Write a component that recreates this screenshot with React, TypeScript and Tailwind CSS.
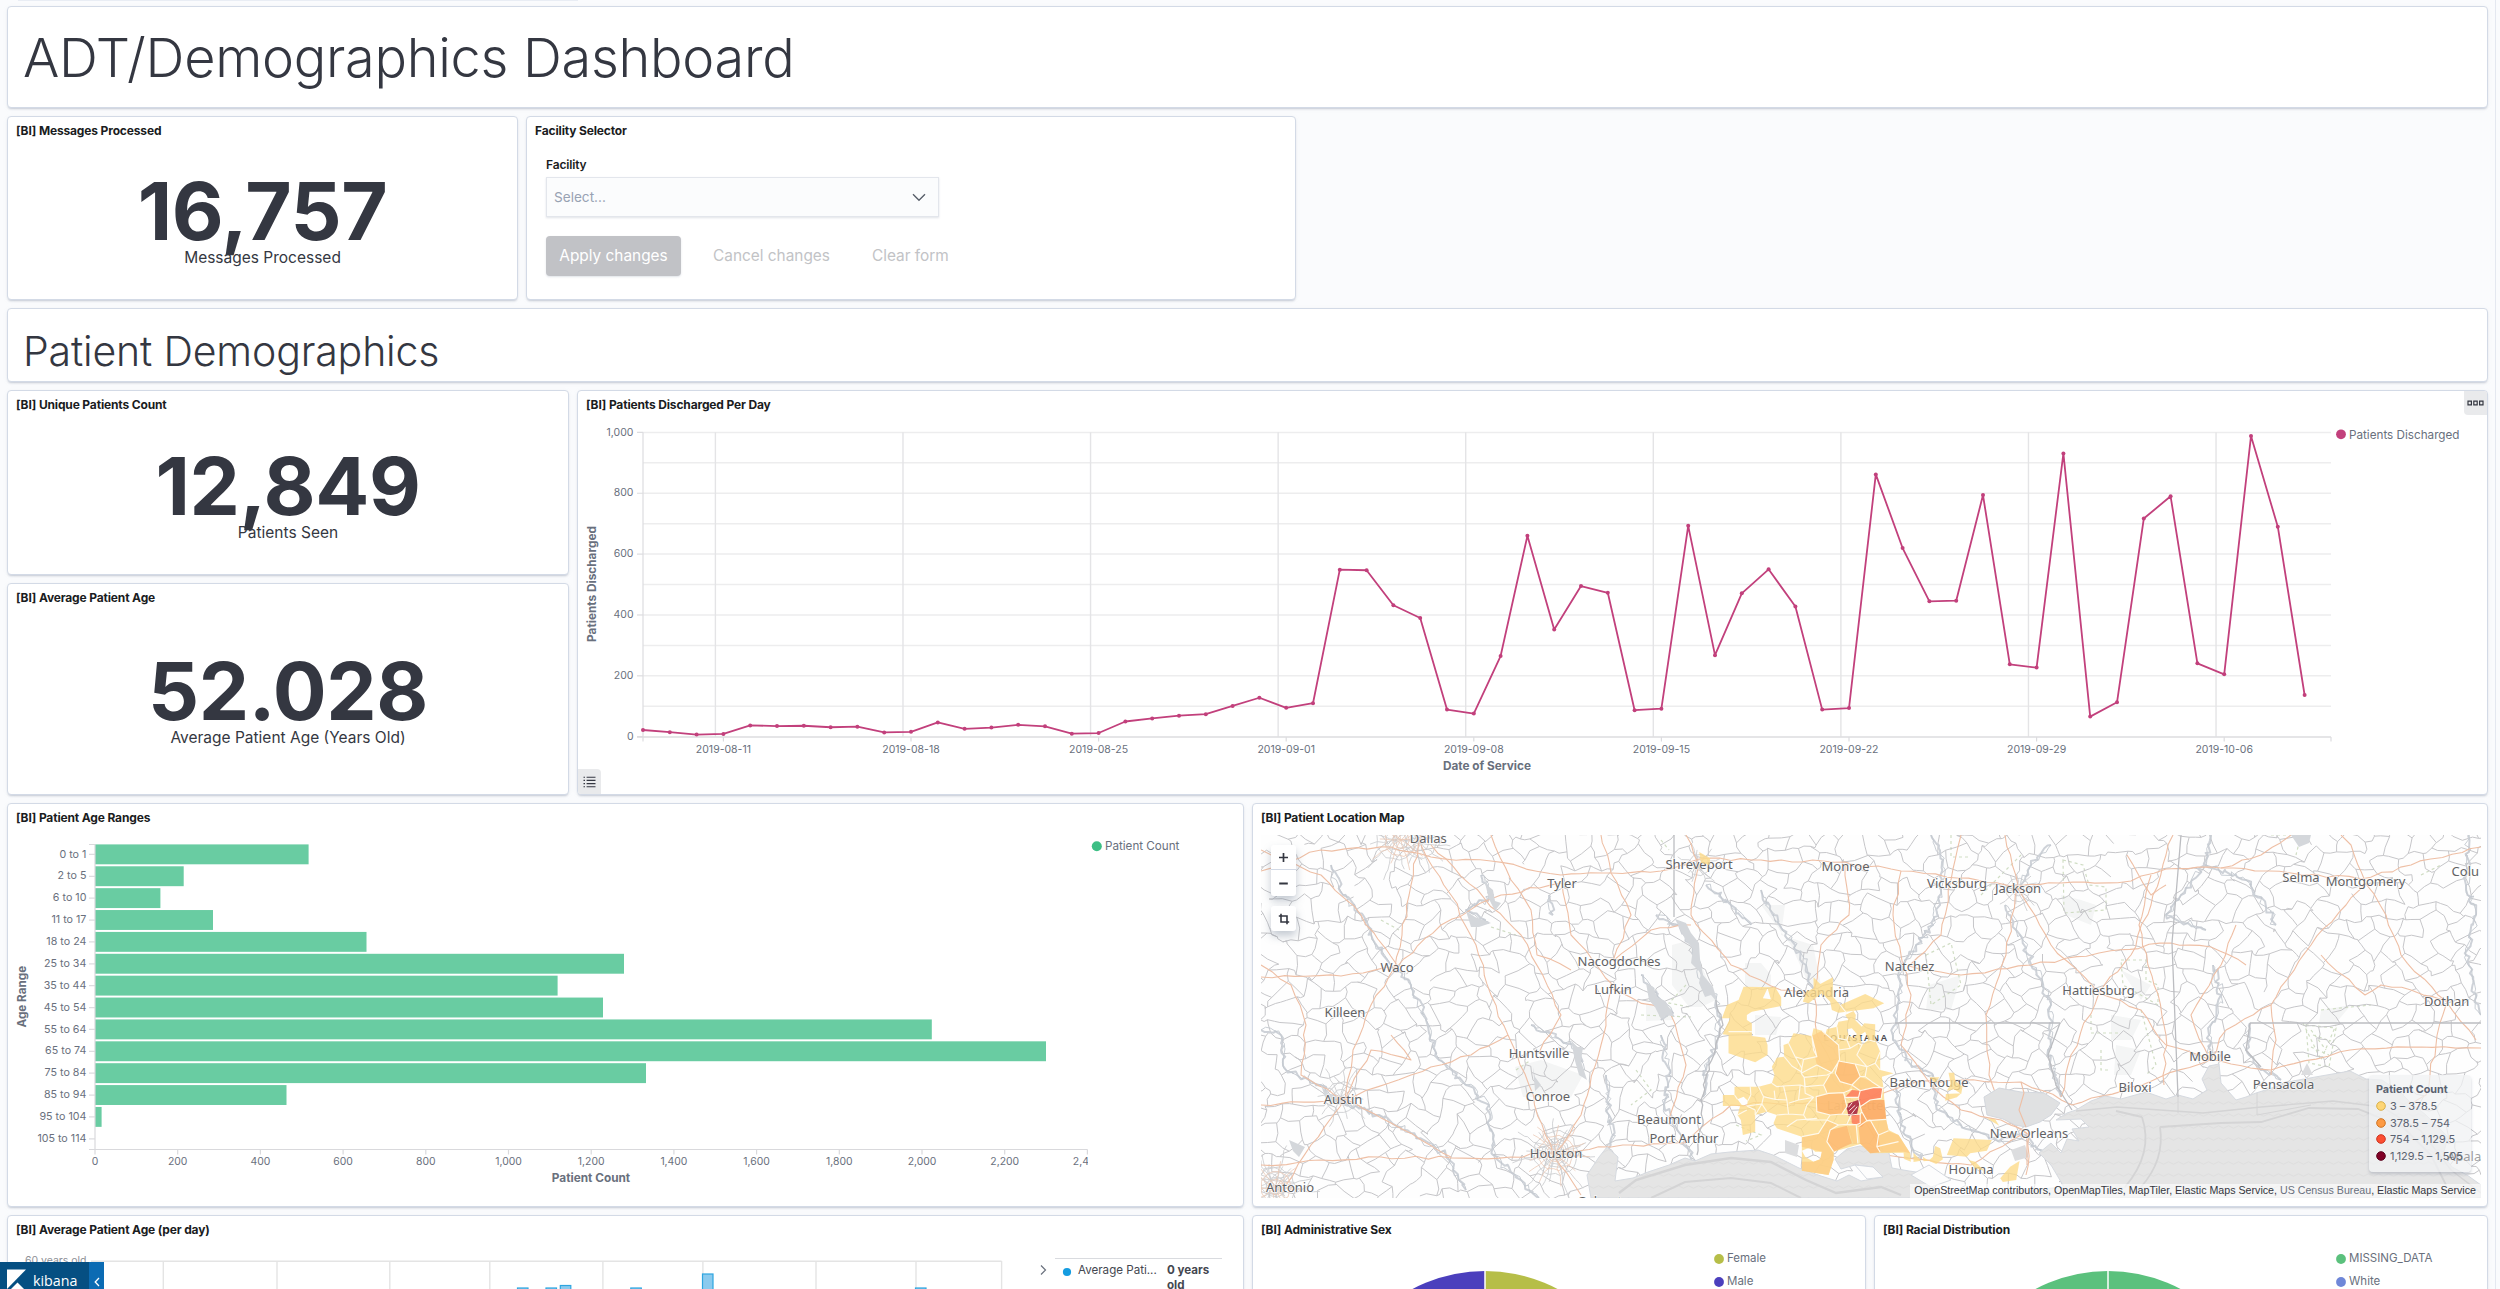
import React from "react";

const INTER = "font-['Inter',sans-serif]";

/* ---------- shared pieces ---------- */

function Panel({
  title,
  className = "",
  children,
}: {
  title?: string;
  className?: string;
  children?: React.ReactNode;
}) {
  return (
    <section
      className={
        "relative shrink-0 overflow-hidden rounded-[4px] border border-[#d3dae6] bg-white shadow-[0_2px_2px_-1px_rgba(152,162,179,0.45),0_1px_5px_-2px_rgba(152,162,179,0.4)] " +
        className
      }
    >
      {title && (
        <h2 className="flex h-[31px] items-center pb-[3px] pl-[8px] text-[12px] font-bold tracking-[-0.15px] text-[#1a1c21]">
          {title}
        </h2>
      )}
      {children}
    </section>
  );
}

function Metric({ value, label, className = "" }: { value: string; label: string; className?: string }) {
  return (
    <div className={"flex flex-col items-center text-[#343741] " + className}>
      <div className="text-[80px] leading-[60px] font-bold tracking-[-0.4px]">{value}</div>
      <div className="relative text-[15.5px] leading-[34px]">{label}</div>
    </div>
  );
}

function T({
  x,
  y,
  children,
  size = 10.5,
  anchor = "middle",
  fill = "#69707d",
  weight = 400,
  rotate,
}: {
  x: number;
  y: number;
  children: React.ReactNode;
  size?: number;
  anchor?: "start" | "middle" | "end";
  fill?: string;
  weight?: number;
  rotate?: boolean;
}) {
  return (
    <text
      x={x}
      y={y}
      dy="0.36em"
      fontSize={size}
      textAnchor={anchor}
      fill={fill}
      fontWeight={weight}
      transform={rotate ? `rotate(-90 ${x} ${y})` : undefined}
    >
      {children}
    </text>
  );
}

/* ---------- line chart ---------- */

const discharged = [
  22, 15, 7, 9, 37, 35, 36, 31, 33, 14, 16, 47, 26, 30, 39, 34, 10, 12, 50, 60, 69, 74, 101, 128, 95, 110, 549, 547,
  432, 390, 89, 76, 265, 660, 352, 495, 473, 87, 92, 693, 268, 471, 550, 428, 89, 94, 862, 620, 445, 447, 794, 238,
  227, 931, 66, 113, 717, 790, 241, 205, 988, 690, 137,
];
const weeks = [
  "2019-08-11",
  "2019-08-18",
  "2019-08-25",
  "2019-09-01",
  "2019-09-08",
  "2019-09-15",
  "2019-09-22",
  "2019-09-29",
  "2019-10-06",
];

function DischargedChart() {
  const px = (i: number) => 643 + i * 26.8;
  const py = (v: number) => 736.7 - v * 0.3043;
  return (
    <svg viewBox="578 422 1909 371" width={1909} height={371} className="block">
      {[1, 2, 3, 4, 5, 6, 7, 8, 9, 10].map((k) => (
        <line key={k} x1={643} x2={2331} y1={py(k * 100)} y2={py(k * 100)} stroke="#ededee" strokeWidth={1.5} />
      ))}
      {weeks.map((w, i) => (
        <g key={w}>
          <line x1={715.4 + i * 187.58} x2={715.4 + i * 187.58} y1={432.3} y2={736.7} stroke="#e4e4e6" strokeWidth={1.4} />
          <line x1={px(3 + i * 7)} x2={px(3 + i * 7)} y1={737} y2={741.5} stroke="#dcdcdf" strokeWidth={1.2} />
          <T x={px(3 + i * 7)} y={749.7}>
            {w}
          </T>
        </g>
      ))}
      <line x1={643} x2={643} y1={432.3} y2={741.5} stroke="#dcdcdf" strokeWidth={1.2} />
      <line x1={637} x2={2331} y1={737} y2={737} stroke="#dcdcdf" strokeWidth={1.5} />
      <line x1={2331} x2={2331} y1={737} y2={741.5} stroke="#dcdcdf" strokeWidth={1.2} />
      {[0, 200, 400, 600, 800, 1000].map((v) => (
        <g key={v}>
          <line x1={637} x2={643} y1={py(v)} y2={py(v)} stroke="#dcdcdf" strokeWidth={1.2} />
          <T x={633.5} y={py(v) - 0.6} anchor="end">
            {v.toLocaleString("en-US")}
          </T>
        </g>
      ))}
      <polyline
        points={discharged.map((v, i) => `${px(i)},${py(v)}`).join(" ")}
        fill="none"
        stroke="#c2407c"
        strokeWidth={1.8}
        strokeLinejoin="round"
      />
      {discharged.map((v, i) => (
        <circle key={i} cx={px(i)} cy={py(v)} r={2} fill="#c2407c" />
      ))}
      <T x={1487} y={765.7} size={11.8} weight={700}>
        Date of Service
      </T>
      <T x={591.7} y={584} size={11.8} weight={700} rotate>
        Patients Discharged
      </T>
      <circle cx={2341} cy={434.3} r={4.9} fill="#c2407c" />
      <T x={2349} y={434.4} size={11.7} anchor="start">
        Patients Discharged
      </T>
    </svg>
  );
}

/* ---------- bar chart ---------- */

const ages: [string, number][] = [
  ["0 to 1", 213.6],
  ["2 to 5", 88.7],
  ["6 to 10", 65.4],
  ["11 to 17", 118],
  ["18 to 24", 271.5],
  ["25 to 34", 529],
  ["35 to 44", 462.6],
  ["45 to 54", 508],
  ["55 to 64", 836.8],
  ["65 to 74", 951],
  ["75 to 84", 551],
  ["85 to 94", 191.5],
  ["95 to 104", 6.6],
  ["105 to 114", 0],
];

function AgeChart() {
  return (
    <svg viewBox="8 835 1235 371" width={1235} height={371} className="block">
      <defs>
        <clipPath id="age-axis">
          <rect x={8} y={1140} width={1080} height={60} />
        </clipPath>
      </defs>
      {ages.map(([label, w], i) => (
        <g key={label}>
          <rect x={95} y={844.4 + i * 21.88} width={w} height={19.9} fill="#69cca2" />
          <line x1={89} x2={95} y1={854.4 + i * 21.88} y2={854.4 + i * 21.88} stroke="#dcdcdf" strokeWidth={1.2} />
          <T x={86.4} y={853.7 + i * 21.88} size={10.7} anchor="end">
            {label}
          </T>
        </g>
      ))}
      <path d="M89 844.5H95V1149.5H89M95 1149.5H1087.5" fill="none" stroke="#d9d9dc" strokeWidth={1.2} />
      <g clipPath="url(#age-axis)">
        {Array.from({ length: 13 }, (_, i) => (
          <g key={i}>
            <line x1={95 + i * 82.7} x2={95 + i * 82.7} y1={1149.5} y2={1154.5} stroke="#d9d9dc" strokeWidth={1.2} />
            <T x={95 + i * 82.7} y={1161.5} size={10.4}>
              {(i * 200).toLocaleString("en-US")}
            </T>
          </g>
        ))}
      </g>
      <T x={591} y={1177.7} size={11.8} weight={700}>
        Patient Count
      </T>
      <T x={21.8} y={996.7} size={11.7} weight={700} rotate>
        Age Range
      </T>
      <circle cx={1096.8} cy={846.3} r={5} fill="#3dbf85" />
      <T x={1105} y={846.3} size={11.65} anchor="start">
        Patient Count
      </T>
    </svg>
  );
}

/* ---------- map ---------- */

function rng(seed: number) {
  let s = seed;
  return () => {
    s = (s * 1664525 + 1013904223) >>> 0;
    return s / 4294967296;
  };
}

/* Brick-like lattice with displaced vertices, read as a mesh of county roads. */
function mesh(w: number, h: number, pitchX: number, pitchY: number, seed: number, drop: number) {
  const r = rng(seed);
  const cols = Math.ceil(w / pitchX) + 3;
  const rows = Math.ceil(h / pitchY) + 3;
  const pts: [number, number][][] = [];
  for (let j = 0; j < rows; j++) {
    pts.push([]);
    for (let i = 0; i < cols; i++) {
      const zig = (i + j) % 2 === 0 ? pitchY * 0.18 : -pitchY * 0.18;
      pts[j].push([
        (i - 1) * pitchX + (r() - 0.5) * pitchX * 1.05,
        (j - 1) * pitchY + zig + (r() - 0.5) * pitchY * 0.85,
      ]);
    }
  }
  let d = "";
  const seg = (a: [number, number], b: [number, number]) => {
    const mx = (a[0] + b[0]) / 2 + (r() - 0.5) * 5;
    const my = (a[1] + b[1]) / 2 + (r() - 0.5) * 5;
    d += `M${a[0].toFixed(1)} ${a[1].toFixed(1)}L${mx.toFixed(1)} ${my.toFixed(1)}L${b[0].toFixed(1)} ${b[1].toFixed(1)}`;
  };
  for (let j = 0; j < rows; j++)
    for (let i = 0; i < cols; i++) {
      if (i + 1 < cols && r() > drop) seg(pts[j][i], pts[j][i + 1]);
      if (j + 1 < rows && (i + j) % 2 === 0 && r() > drop) seg(pts[j][i], pts[j + 1][i]);
    }
  return d;
}

/* Route through waypoints with small natural bends. */
function wander(points: number[], amp: number, seed: number, step = 9) {
  const r = rng(seed);
  let d = `M${points[0]} ${points[1]}`;
  for (let k = 2; k < points.length; k += 2) {
    const [ax, ay, bx, by] = [points[k - 2], points[k - 1], points[k], points[k + 1]];
    const n = Math.max(1, Math.round(Math.hypot(bx - ax, by - ay) / step));
    for (let i = 1; i <= n; i++) {
      const t = i / n;
      const j = i === n ? 0 : amp;
      d += `L${(ax + (bx - ax) * t + (r() - 0.5) * j * 2).toFixed(1)} ${(ay + (by - ay) * t + (r() - 0.5) * j * 2).toFixed(1)}`;
    }
  }
  return d;
}

function spokes(cx: number, cy: number, radius: number, seed: number) {
  const r = rng(seed);
  let d = "";
  for (let k = 0; k < 11; k++) {
    const a = (k / 11) * Math.PI * 2 + r() * 0.4;
    const l = radius * (0.7 + r() * 0.6);
    d += wander([cx, cy, cx + Math.cos(a) * l, cy + Math.sin(a) * l], 1.6, seed + k, 6);
  }
  for (const q of [0.3, 0.6]) {
    const ring: number[] = [];
    for (let k = 0; k <= 9; k++) {
      const a = (k / 9) * Math.PI * 2;
      ring.push(cx + Math.cos(a) * radius * q, cy + Math.sin(a) * radius * q);
    }
    d += wander(ring, 1.2, seed + 77, 6);
  }
  return d;
}

const countyRoads = mesh(1220, 363, 12.5, 17, 11, 0.07);

const highways = [
  [0, 36, 30, 26, 60, 15, 130, 12, 170, 22, 230, 26, 300, 40, 350, 38, 400, 36, 438, 24, 500, 25, 584, 27, 640, 36, 696, 43, 757, 51, 800, 48, 870, 46, 905, 34, 960, 33, 1030, 38, 1100, 44, 1150, 30, 1220, 12],
  [160, 0, 150, 50, 141, 100, 134, 132, 110, 170, 92, 215, 84, 264, 50, 310, 25, 350],
  [160, 10, 190, 60, 215, 110, 230, 160, 247, 200, 268, 250, 292, 320, 320, 360],
  [0, 330, 60, 325, 120, 322, 190, 323, 250, 322, 292, 318, 350, 312, 423, 308, 470, 270, 530, 268, 594, 268, 660, 246, 700, 245, 760, 247, 811, 270, 870, 252, 949, 225, 1010, 235, 1089, 215, 1160, 212, 1220, 213],
  [757, 51, 745, 120, 725, 180, 728, 240, 745, 285, 768, 300],
  [757, 53, 790, 110, 838, 158, 810, 220, 800, 262],
  [838, 158, 870, 120, 890, 70, 905, 20, 912, 0],
  [838, 158, 880, 175, 905, 210, 949, 225, 965, 195, 1010, 170, 1050, 110, 1085, 70, 1104, 48, 1125, 80, 1140, 120, 1185, 166, 1215, 205],
  [890, 40, 878, 90, 893, 150, 905, 200, 903, 250],
  [438, 29, 430, 80, 470, 130, 520, 155, 553, 160, 556, 200, 590, 265],
  [438, 29, 425, 0],
  [584, 30, 588, 80, 560, 110, 553, 155],
  [84, 264, 150, 240, 210, 220, 247, 200],
  [0, 270, 84, 264, 130, 288, 190, 322],
  [84, 264, 40, 240, 45, 190, 30, 150, 0, 130],
  [136, 132, 80, 141, 0, 142],
  [136, 132, 180, 90, 240, 60, 300, 48],
  [301, 48, 310, 100, 352, 150, 340, 210, 320, 280, 295, 318],
  [352, 154, 410, 180, 425, 230, 408, 284],
  [352, 126, 370, 80, 350, 38, 340, 0],
  [352, 126, 390, 95, 430, 90],
  [230, 0, 250, 45, 270, 75, 276, 120, 310, 135],
  [640, 36, 632, 80, 640, 120, 650, 160, 640, 210, 668, 247],
  [648, 131, 700, 140, 770, 130, 838, 118, 910, 108, 950, 112, 985, 130],
  [700, 0, 690, 45, 680, 100, 648, 131],
  [668, 247, 700, 275, 740, 285, 768, 300, 765, 340],
  [594, 270, 625, 320, 710, 330, 760, 300],
  [1104, 46, 1090, 10, 1080, 0],
  [949, 225, 930, 180, 960, 130, 975, 90],
  [1185, 166, 1150, 155, 1120, 150, 1104, 160, 1060, 120],
  [1010, 170, 1015, 205, 1010, 240],
  [1185, 170, 1175, 210, 1165, 260, 1140, 275],
  [0, 15, 60, 40, 100, 80, 136, 130],
  [170, 10, 260, 100, 300, 180, 278, 218],
  [84, 264, 110, 215, 150, 225, 130, 200],
  [1030, 0, 1000, 20, 960, 33],
  [744, 0, 757, 51],
  [866, 20, 890, 60, 905, 50],
];

const rivers = [
  [70, 30, 82, 60, 105, 85, 112, 105, 130, 130, 150, 150, 165, 185, 178, 225, 205, 250, 228, 270, 232, 320, 260, 345, 278, 363],
  [0, 195, 20, 200, 25, 235, 60, 250, 80, 268, 118, 280, 150, 298, 185, 320, 205, 355],
  [220, 40, 232, 60, 205, 75, 228, 88],
  [288, 60, 292, 80],
  [395, 80, 418, 90, 432, 110, 440, 145, 455, 165, 458, 200, 445, 235, 442, 262],
  [380, 140, 400, 165, 412, 178, 400, 185],
  [400, 200, 408, 240, 403, 270, 420, 300, 434, 328],
  [345, 240, 348, 280, 352, 300, 346, 320],
  [270, 190, 300, 205, 318, 215, 322, 240],
  [670, 0, 682, 25, 680, 55, 672, 90, 655, 110, 640, 130, 638, 165, 632, 205, 650, 230, 672, 240, 675, 270, 700, 290, 735, 305, 765, 300, 790, 330],
  [635, 250, 640, 290, 660, 325],
  [500, 55, 512, 80, 530, 105, 545, 130, 553, 165],
  [445, 50, 470, 70, 490, 90],
  [744, 70, 755, 95, 775, 135, 790, 170, 787, 215, 800, 262],
  [950, 0, 945, 30, 985, 45, 1005, 72, 1015, 90],
  [952, 130, 960, 160, 948, 200, 950, 225],
  [1208, 0, 1205, 50, 1215, 80, 1205, 120, 1214, 165, 1220, 180],
  [790, 10, 770, 30, 760, 50],
  [945, 30, 920, 60, 905, 80, 945, 95],
  [989, 188, 985, 215, 1000, 235, 1020, 245],
];

const coast =
  "M330 363L326 340L338 322L346 312L357 322L354 346L372 343L387 337L408 330L424 323L434 326L450 319L469 317L497 315L512 320L538 333L560 341L576 346L588 340L600 346L622 342L612 332L594 330L580 334L574 324L586 314L599 311L616 314L628 318L631 333L648 336L662 338L667 350L690 362L803 352L790 330L778 318L790 308L800 318L806 304L818 306L811 294L828 292L820 284L795 285L806 278L815 275L830 266L844 261L860 264L885 257L905 264L917 260L932 264L946 255L941 244L948 231L958 229L960 248L975 265L985 262L995 258L1014 252L1032 246L1060 241L1089 236L1105 244L1121 245L1140 258L1150 268L1165 280L1187 302L1182 320L1191 332L1206 340L1220 350V363Z";

const cities: [string, number, number][] = [
  ["Dallas", 167.3, 3],
  ["Tyler", 301, 48],
  ["Shreveport", 438, 29.5],
  ["Monroe", 584.5, 31],
  ["Waco", 136, 132],
  ["Nacogdoches", 358, 126.5],
  ["Lufkin", 352, 154],
  ["Alexandria", 555.5, 157],
  ["Killeen", 84, 177],
  ["Huntsville", 278, 218],
  ["Conroe", 287, 261],
  ["Austin", 82, 264.5],
  ["Beaumont", 408, 284],
  ["Port Arthur", 423, 303],
  ["Houston", 295, 318],
  ["Antonio", 29, 352],
  ["Galveston", 346.5, 366],
  ["Vicksburg", 696, 48],
  ["Jackson", 757, 53],
  ["Natchez", 648.6, 131],
  ["Hattiesburg", 837.6, 155.5],
  ["Selma", 1040, 42],
  ["Montgomery", 1104.5, 46.5],
  ["Dothan", 1185.7, 166],
  ["Mobile", 949, 221],
  ["Biloxi", 874, 252],
  ["Pensacola", 1022.5, 249.5],
  ["Baton Rouge", 668, 247.5],
  ["New Orleans", 768, 298],
  ["Houma", 710, 334.5],
  ["Lafayette", 594, 270],
];

/* ZIP areas; drawn at three units to the pixel. */
const zipYellow = [
  "M340 220L395 228L400 205L425 212L433 232L440 208L470 200L475 185L505 180L495 165L520 153L527 165L525 180L545 200L552 190L585 193L585 240L600 275L600 330L640 340L605 350L610 385L612 415L618 480L625 510L655 525L690 580L692 605L672 597L670 578L570 580L540 552L460 575L460 600L445 645L365 632L365 530L290 505L280 490L290 465L260 455L225 465L225 515L188 525L182 480L172 465L180 437L128 438L128 405L163 405L163 380L235 380L275 370L283 345L275 320L290 293L312 290L310 255L325 250ZM365 572L390 562L405 575L425 575L420 598L400 605L375 590ZM172 418L190 410L203 422L200 438L184 434ZM500 208L515 205L530 222L520 235L505 225ZM540 225L555 215L565 240L545 255Z",
  "M190 80L285 82L303 112L303 138L215 155L200 165L200 180L215 190V228L255 233L262 255V285L225 307L145 280V225L127 223L150 175H125L140 135L175 120ZM262 85L272 118L248 115Z",
  "M400 52L420 72L458 52V110L480 135L555 102L612 130L580 145L475 158L455 150L450 125L425 100L385 130L368 125L378 95L400 85Z",
  "M748 352H778L765 368ZM805 338H822L825 362L847 380L843 402L822 388L800 392L812 372ZM797 402L843 400L830 412L795 422Z",
  "M920 475L945 478L957 497Z",
  "M820 535L935 540L920 572L870 580L860 590L800 585Z",
  "M765 558L780 565L788 598L768 612L745 602L758 590ZM700 578L722 602L700 606ZM728 590L745 602L730 604Z",
  "M865 600L885 605L912 632L885 625Z",
  "M1018 603L1008 660L968 666L960 655L990 620Z",
  "M57 -324L90 -305L88 -285L62 -292Z",
];
const zipAmber = [
  "M395 228L425 212L475 255L478 300L455 338L410 315L400 270Z",
  "M365 530L415 520L440 480L475 495L450 510L440 545L460 575V600L445 645L365 632V605L400 605L420 598L425 575L365 560Z",
  "M465 340L480 365L515 375L500 398L440 398L430 375L448 345Z",
  "M540 350L575 365L605 385L575 383L540 392L515 385L520 372Z",
  "M595 525L620 512L655 525L690 580L670 575L600 577L590 560Z",
  "M500 500L528 494L533 550L520 552Z",
  "M570 480L618 480L625 510L595 525Z",
];
const zipOrange = [
  "M475 303L525 312L540 350L515 375L480 365L465 340Z",
  "M445 400L490 398L500 440L485 462L450 465L410 455L408 410Z",
  "M450 510L500 497L515 550L460 575L440 545Z",
  "M535 500L570 480L595 525L600 577L570 580L540 550Z",
];
const zipDeep = ["M570 420L612 420L618 478L560 482L545 455L540 440Z", "M560 482L545 500L535 498L545 455Z"];
const zipRed = [
  "M515 390L540 392L535 412H495Z",
  "M540 390L580 383H608L603 415L570 420L540 440L535 415Z",
  "M513 465L540 462V490L530 496L515 490Z",
];
const zipLines =
  "M325 250L345 290L365 325L363 340M345 290L370 298L410 290L400 270L395 228L410 290M312 290L335 318L363 335L370 298M363 340L410 315L455 338L478 300L475 255L425 212M363 340L372 352L440 345L455 338M372 352L375 380L430 375M372 352L375 400L400 412L380 435L370 465L380 480L440 480M275 370L290 380L310 378L360 375L375 380M310 378L320 420L325 462L290 465M320 420L285 418L282 392M360 375L355 420L325 430M355 420L400 412M235 380L250 410L245 432L225 465M250 410L285 418M245 432L260 455M210 378L212 405L203 422M163 405L172 418M200 438L245 432M200 438L225 450L225 465M172 465L200 450M325 462L370 465M320 500L350 480L410 475M408 410L445 400L490 398L500 440L485 462L450 465L410 455ZM450 465L440 480L475 495L500 493L513 465M475 495L450 510L440 545L460 575M440 480L415 520L365 530M500 493L528 494L540 490V462M528 494L533 550M475 303L525 312L540 350L515 375L480 365L465 340ZM478 300L475 303M475 270L510 265L535 250L545 255L530 285L560 320L585 310L600 275M510 265L500 240L475 235L470 200M500 240L505 225M560 320L555 350L540 350M525 312L560 320M585 310L600 330M565 240L585 245M555 350L575 365L605 385M515 375L540 392L580 383L608 383L603 415L570 420L540 440M540 392L535 412H495L490 398L515 388M430 375L440 398M430 375L448 345M485 462L513 465L540 462L545 455L560 482L618 478M545 455L540 440L535 415M560 482L570 480L595 525L625 512M535 500L560 482M595 525L590 560L655 545M590 560L600 577M145 215L215 215M480 135L500 160";

const legendRows: [string, string, string][] = [
  ["3 – 378.5", "#fed676", "#d9b04a"],
  ["378.5 – 754", "#fd9a43", "#cf7423"],
  ["754 – 1,129.5", "#fc4e32", "#cc3420"],
  ["1,129.5 – 1,505", "#800026", "#5a001b"],
];

function MapView() {
  return (
    <div className="relative ml-[8px] h-[363px] w-[1220px] overflow-hidden">
      <svg viewBox="0 0 1220 363" width={1220} height={363} className="block font-['Noto_Sans',sans-serif]">
        <defs>
          <pattern id="waves" width="10" height="12" patternUnits="userSpaceOnUse">
            <rect width="10" height="12" fill="#e5e5e5" />
            <path d="M0 4Q2.5 6.5 5 4T10 4" fill="none" stroke="#dedede" strokeWidth="1" />
          </pattern>
          <clipPath id="gulf">
            <path d={coast} />
          </clipPath>
        </defs>
        <rect width="1220" height="363" fill="#fefefe" />
        <g fill="#f4f5f5">
          <path d="M411 110L430 105L455 165L440 172H428L411 150ZM254 232L280 225L322 240L310 262H262ZM484 128H500L510 140V152H484ZM500 70H524L520 100L552 110L560 150H548L530 110ZM800 60L820 65L835 70L830 90L805 80ZM860 135L890 150L880 165ZM850 180L880 185L870 205H850ZM855 210L880 215L870 240H853ZM668 150L700 140L690 175H665ZM1060 175L1090 170L1075 188H1058ZM494 180L520 182L515 200H494ZM385 170L410 172L412 185L385 186Z" />
        </g>
        <g fill="none" stroke="#d0ddc4" strokeWidth="1.2" strokeDasharray="3 3">
          <path d="M802 25L822 30L828 50L845 52V75L803 78ZM860 125H885V145L897 150V170L862 150ZM425 150L408 168L428 172M380 180L430 182M255 235L270 225M375 235L390 255L370 270M665 120L690 108L700 150L670 170ZM1042 188L1060 225L1075 190M1050 195L1065 215M830 180V198H860M840 215V235H850M1010 0H1040L1035 20M690 0V22H710M400 5L408 15M475 290L500 300L485 306M720 60L760 20M1060 175L1110 170M120 85L138 95M230 92L255 100M1160 40L1180 30" />
          <path d="M1045 190L1075 193L1068 232L1048 228ZM1052 200L1070 206M1050 212L1068 220M880 175L895 230L885 240" />
        </g>
        <g fill="none" strokeLinejoin="round">
          <path d={countyRoads} stroke="#c6c6c9" strokeWidth="1" />
          <path
            d={
              spokes(295, 318, 38, 3) +
              spokes(295, 318, 24, 9) +
              spokes(135, 5, 34, 21) +
              spokes(160, 8, 26, 27) +
              spokes(80, 262, 26, 33) +
              spokes(15, 352, 34, 41) +
              spokes(10, 345, 22, 48) +
              spokes(757, 55, 20, 55) +
              spokes(438, 30, 18, 61)
            }
            stroke="#cecfd1"
            strokeWidth="0.9"
          />
          {rivers.map((p, i) => (
            <g key={i}>
              <path d={wander(p, 3, 400 + i, 4)} stroke="#ced2d8" strokeWidth="2" />
              <path d={wander(p, 3.8, 900 + i, 4.5)} stroke="#c3c8cf" strokeWidth="0.9" />
            </g>
          ))}
          {highways.map((p, i) => (
            <path key={i} d={wander(p, 1.6, 60 + i, 11)} stroke="#eebfa5" strokeWidth="1.1" />
          ))}
          <path
            d={spokes(295, 318, 30, 71) + spokes(140, 5, 28, 75) + spokes(15, 352, 26, 79)}
            stroke="#ebcab8"
            strokeWidth="0.8"
          />
        </g>
        <g fill="#d4d7db">
          <path d="M414 84L425 88L430 98L438 108L439 124L442 140L452 152L457 168L450 160L444 162L438 148L440 138L430 128L432 114L424 104Z" />
          <path d="M385 148L392 152L396 162L404 166L414 182L406 180L400 184L394 172L388 165ZM310 205L316 212L322 212L320 226L326 245L318 240L314 226ZM222 40L226 50L232 55L234 66L240 68L234 76L228 64ZM205 76L214 82L230 88L218 92L210 92ZM60 250L66 258L76 262L70 270L64 262ZM272 232L274 242L280 250L274 256ZM1030 0H1050L1048 8L1038 12ZM28 305L44 312L38 322L32 316Z" />
        </g>
        <path d={coast} fill="url(#waves)" stroke="#d6dae0" strokeWidth="1" />
        <path
          d="M723 262L738 253L760 257L783 258L799 268L790 280L779 287L765 292L754 290L742 284L726 280Z"
          fill="#e0e1e2"
          stroke="#d3d7dd"
        />
        <path d="M524 305L538 310L536 322L524 318ZM750 315L764 310L768 322L754 326ZM1040 240L1046 228L1052 240Z" fill="#dcdddf" />
        <path d="M594 330L612 332L622 342L606 344ZM650 340L668 330L690 345L670 352Z" fill="#fdfdfd" stroke="#d6dae0" />
        <g clipPath="url(#gulf)" fill="none" stroke="#d4d4d5" strokeWidth="1.8">
          <path d="M358 358L375 345L424 330L470 323L510 327L545 345L575 358L620 352L640 360" strokeWidth="2.4" />
          <path d="M390 363L424 347L470 343L510 348L540 363" strokeWidth="2" />
          <path d="M815 276L856 272L942 278L1000 272L1072 266L1121 272L1160 296L1190 335L1220 358" strokeWidth="1.4" />
          <path d="M881 282Q893 318 864 352M899 292Q904 325 880 352" />
          <path d="M881 282L855 276M899 292L960 288L1000 287L1048 273L1097 274L1142 292L1170 320L1185 350" />
          <path d="M917 262V278M996 258V280L1050 270" strokeWidth="1" />
        </g>
        <path d="M760 247L763 258L758 275L765 292M766 300V330" fill="none" stroke="#eebfa5" strokeWidth="1.1" />
        <g fill="none" stroke="#bcbdc1" strokeWidth="1.3">
          <path d="M413 0V82M634 188H799M799 188L787 220L795 250L811 275M920 0L911 108L917 262M989 188H1220" />
          <path d={wander([455, 165, 462, 190, 448, 230, 440, 265, 442, 285, 436, 320], 1.6, 5, 5)} />
          <path d="M989 188L985 215L1000 232" />
        </g>
        <g fontSize="13" fill="#626264" textAnchor="middle">
          {cities.map(([name, x, y]) => (
            <text key={name} x={x} y={y + 4.6} stroke="#fff" strokeOpacity="0.7" strokeWidth="1.6" paintOrder="stroke">
              {name}
            </text>
          ))}
          <text x="1190.6" y="40.8" textAnchor="start" stroke="#fff" strokeOpacity="0.7" strokeWidth="1.6" paintOrder="stroke">
            Colu
          </text>
          <text x="595" y="206.4" fontSize="9.4" fontWeight="600" letterSpacing="1.5" fill="#4c4c50">
            LOUISIANA
          </text>
        </g>
        <g transform="translate(419.2 125) scale(0.33333)" fillRule="evenodd">
          <g fillOpacity="0.8">
            <g fill="#fddb8a">
              {zipYellow.map((d, i) => (
                <path key={i} d={d} />
              ))}
            </g>
            <g fill="#fdcd84">
              {zipAmber.map((d, i) => (
                <path key={i} d={d} />
              ))}
            </g>
            <g fill="#fcb66f">
              {zipOrange.map((d, i) => (
                <path key={i} d={d} />
              ))}
            </g>
            <g fill="#fba562">
              {zipDeep.map((d, i) => (
                <path key={i} d={d} />
              ))}
            </g>
            <g fill="#fc7458">
              {zipRed.map((d, i) => (
                <path key={i} d={d} />
              ))}
            </g>
            <path d="M505 430L540 418L530 465L505 468L500 445Z" fill="#a01238" />
          </g>
          <path d={zipLines} fill="none" stroke="#fff9ea" strokeWidth="3.4" strokeLinejoin="round" />
          <path d="M507 452L525 436M513 463L531 440M505 442L516 428" stroke="#fbe3e0" strokeWidth="3" />
        </g>
      </svg>

      <div className="absolute top-[10px] left-[10px] w-[25px] rounded-[3px] bg-white text-[#343741] shadow-[0_5px_8px_rgba(90,105,130,0.35)]">
        <div className="flex h-[25px] items-center justify-center border-b border-[#d3dae6]">
          <svg width="11" height="11" viewBox="0 0 11 11" fill="none" stroke="currentColor" strokeWidth="1.7">
            <path d="M5.5 1V10M1 5.5H10" />
          </svg>
        </div>
        <div className="flex h-[26px] items-center justify-center">
          <svg width="11" height="11" viewBox="0 0 11 11" fill="none" stroke="currentColor" strokeWidth="2">
            <path d="M1.2 5.5H9.8" />
          </svg>
        </div>
      </div>
      <div className="absolute top-[71px] left-[10px] flex h-[25px] w-[25px] items-center justify-center rounded-[3px] bg-white text-[#343741] shadow-[0_5px_8px_rgba(90,105,130,0.35)]">
        <svg width="12" height="12" viewBox="0 0 12 12" fill="none" stroke="currentColor" strokeWidth="1.6">
          <path d="M3 0.8V9H11.2M0.8 3H9V11.2" />
        </svg>
      </div>

      <div className="absolute top-[240px] left-[1108px] h-[97px] w-[102px] rounded-[4px] bg-[#f0f1f3]/75 pt-[7px] pl-[7px] text-[11px] text-[#5a6270] shadow-[0_2px_3px_rgba(120,130,150,0.35)]">
        <div className="h-[16px] text-[10.8px] leading-[16px] font-bold whitespace-nowrap">Patient Count</div>
        {legendRows.map(([label, fill, edge]) => (
          <div key={label} className="flex h-[16.6px] items-center gap-[4px] whitespace-nowrap">
            <svg width="10" height="10" viewBox="0 0 10 10" className="shrink-0">
              <circle cx="5" cy="5" r="4.3" fill={fill} stroke={edge} />
            </svg>
            <span className="text-[10.9px]">{label}</span>
          </div>
        ))}
      </div>
      <span className="absolute top-[312px] left-[1186px] font-['Noto_Sans',sans-serif] text-[13px] leading-[18px] text-[#626264]/60">
        Apala
      </span>

      <div className="absolute right-0 bottom-0 h-[14px] bg-white/60 pr-[5px] pl-[4px] font-['Liberation_Sans',sans-serif] text-[10.67px] leading-[13px] whitespace-nowrap text-[#343741]">
        OpenStreetMap contributors, OpenMapTiles, MapTiler, Elastic Maps Service,{" "}
        <span className="text-[#69707d]">US Census Bureau</span>, Elastic Maps Service
      </div>
    </div>
  );
}

/* ---------- bottom row ---------- */

const ageBars: [number, number][] = [
  [517.5, 1288],
  [546, 1288],
  [560.3, 1285.5],
  [630.8, 1288],
  [702.5, 1274],
  [915.5, 1288],
];

function AveragePerDay() {
  return (
    <div className="flex">
      <svg viewBox="8 1247 1020 60" width={1020} height={60} className="block shrink-0">
        <T x={86.5} y={1260} size={10.5} anchor="end" fill="#8d9096">
          60 years old
        </T>
        <path
          d="M91 1261.3H1001.6M163.3 1261V1310M277 1261V1310M389.8 1261V1310M489.8 1261V1310M602.9 1261V1310M702.9 1261V1310M816 1261V1310M916 1261V1310M1001.6 1261V1310"
          stroke="#e4e4e4"
          strokeWidth="1.4"
          fill="none"
        />
        {ageBars.map(([x, y]) => (
          <rect key={x} x={x} y={y} width={10.5} height={40} fill="#8bcaee" stroke="#2ea5e0" strokeWidth="1.2" />
        ))}
      </svg>
      <svg width="9" height="12" viewBox="0 0 9 12" className="mt-[17px] ml-[11px] shrink-0" fill="none" stroke="#69707d" strokeWidth="1.2">
        <path d="M2 1.5L6.5 6L2 10.5" />
      </svg>
      <div className="mt-[11px] ml-[7px] flex w-[167px] border-t-[1.5px] border-[#d9dbdf] pt-[4px] text-[11.6px] leading-[15px] text-[#444750]">
        <svg width="10" height="10" viewBox="0 0 10 10" className="mt-[4px] ml-[7px] shrink-0">
          <circle cx="5" cy="5" r="4.1" fill="#159ce0" />
        </svg>
        <span className="ml-[6px] w-[89px] whitespace-nowrap">Average Pati...</span>
        <span className="font-bold">
          <span className="whitespace-nowrap">0 years</span>
          <br />
          old
        </span>
      </div>
    </div>
  );
}

function PieLegend({ items }: { items: [string, string][] }) {
  return (
    <ul className="text-[11.5px] leading-[23.4px] text-[#69707d]">
      {items.map(([label, color]) => (
        <li key={label} className="flex items-center gap-[3px]">
          <svg width="10" height="10" viewBox="0 0 10 10">
            <circle cx="5" cy="5" r="4.9" fill={color} />
          </svg>
          {label}
        </li>
      ))}
    </ul>
  );
}

function HalfPie({ left, right }: { left: string; right: string }) {
  return (
    <svg width="312" height="60" viewBox="0 0 312 60" className="mt-[22.5px] block shrink-0">
      <path d="M156 1A155 155 0 0 0 1 156H156Z" fill={left} />
      <path d="M156 1A155 155 0 0 1 311 156H156Z" fill={right} />
      <path d="M156 0V60" stroke="#fff" strokeWidth="1.5" />
    </svg>
  );
}

/* ---------- page ---------- */

export default function App() {
  return (
    <div className={"relative h-[1289px] w-[2500px] overflow-hidden bg-[#fafbfd] antialiased " + INTER}>
      <div className="flex h-[1289px] w-[2496px] flex-col gap-2 border-r border-[#e4e8f0] pt-[6px] pl-[7px]">
        <Panel className="flex h-[102px] w-[2481px] items-center pt-[2px] pl-[15px]">
          <h1 className="text-[54px] leading-none font-light tracking-[-0.28px] text-[#343741]">
            ADT/Demographics Dashboard
          </h1>
        </Panel>

        <div className="flex gap-2">
          <Panel title="[BI] Messages Processed" className="h-[184px] w-[511px]">
            <Metric value="16,757" label="Messages Processed" className="mt-[33px]" />
          </Panel>
          <Panel title="Facility Selector" className="h-[184px] w-[770px]">
            <div className="pt-[9px] pl-[19px]">
              <label className="block h-4 text-[12px] leading-4 font-semibold tracking-[-0.15px] text-[#1a1c21]">
                Facility
              </label>
              <div className="mt-1 flex h-10 w-[393px] items-center justify-between border border-[#e3e6ec] bg-[#fbfcfd] pr-[12px] pl-[7px] text-[13.6px] text-[#98a2b3] shadow-[0_1px_2px_rgba(152,162,179,0.3)]">
                Select...
                <svg width="14" height="9" viewBox="0 0 14 9" fill="none" stroke="#5a606b" strokeWidth="1.4">
                  <path d="M1 1.2L7 7.2L13 1.2" />
                </svg>
              </div>
              <div className="mt-[19px] flex h-10 items-center text-[15.4px] text-[#c2c3c6]">
                <button className="h-10 w-[135px] rounded-[4px] bg-[#c1c2c6] text-white shadow-[0_1px_2px_rgba(152,162,179,0.3)]">
                  Apply changes
                </button>
                <span className="ml-[32px] w-[159px]">Cancel changes</span>
                <span>Clear form</span>
              </div>
            </div>
          </Panel>
        </div>

        <Panel className="flex h-[74px] w-[2481px] items-center pt-[12px] pl-[15px]">
          <h1 className="text-[41px] leading-none font-light tracking-[-0.16px] text-[#343741]">Patient Demographics</h1>
        </Panel>

        <div className="flex gap-2">
          <div className="flex flex-col gap-2">
            <Panel title="[BI] Unique Patients Count" className="h-[185px] w-[562px]">
              <Metric value="12,849" label="Patients Seen" className="mt-[34px]" />
            </Panel>
            <Panel title="[BI] Average Patient Age" className="h-[212px] w-[562px]">
              <Metric value="52.028" label="Average Patient Age (Years Old)" className="mt-[46px]" />
            </Panel>
          </div>
          <Panel title="[BI] Patients Discharged Per Day" className="h-[405px] w-[1911px]">
            <DischargedChart />
            <div className="absolute top-0 right-0 flex h-[24px] w-[23px] items-center justify-center rounded-bl-[4px] bg-[#e9eaec]">
              <svg width="17" height="6" viewBox="0 0 17 6" fill="none" stroke="#343741" strokeWidth="1.2">
                <path d="M1 1.2H4.4V4.8H1ZM6.8 1.2H10.2V4.8H6.8ZM12.6 1.2H16V4.8H12.6Z" />
              </svg>
            </div>
            <div className="absolute bottom-0 left-0 flex h-[25px] w-[23px] items-center justify-center rounded-tr-[4px] bg-[#e9eaec]">
              <svg width="13" height="12" viewBox="0 0 13 12" stroke="#343741" strokeWidth="1.1">
                <path d="M0.5 1.2H2M0.5 4.4H2M0.5 7.6H2M0.5 10.8H2M3.6 1.2H12.5M3.6 4.4H12.5M3.6 7.6H12.5M3.6 10.8H12.5" />
              </svg>
            </div>
          </Panel>
        </div>

        <div className="flex gap-2">
          <Panel title="[BI] Patient Age Ranges" className="h-[404px] w-[1237px]">
            <AgeChart />
          </Panel>
          <Panel title="[BI] Patient Location Map" className="h-[404px] w-[1236px]">
            <MapView />
          </Panel>
        </div>

        <div className="flex">
          <Panel title="[BI] Average Patient Age (per day)" className="h-[300px] w-[1237px]">
            <AveragePerDay />
          </Panel>
          <Panel title="[BI] Administrative Sex" className="ml-[8px] h-[300px] w-[614px]">
            <div className="flex pl-[76px]">
              <HalfPie left="#4b3fbd" right="#b6be48" />
              <div className="ml-[73px]">
                <PieLegend
                  items={[
                    ["Female", "#b6be48"],
                    ["Male", "#4b3fbd"],
                  ]}
                />
              </div>
            </div>
          </Panel>
          <Panel title="[BI] Racial Distribution" className="ml-[8px] h-[300px] w-[614px]">
            <div className="flex pl-[77px]">
              <HalfPie left="#5bc17d" right="#5bc17d" />
              <div className="ml-[72px]">
                <PieLegend
                  items={[
                    ["MISSING_DATA", "#5bc17d"],
                    ["White", "#6f87d8"],
                  ]}
                />
              </div>
            </div>
          </Panel>
        </div>
      </div>

      <div className="absolute top-0 left-[18px] h-px w-[560px] bg-[#e9edf4]" />

      <div className="absolute bottom-0 left-0 flex h-[27px] w-[104px] bg-[#054f82] text-white">
        <svg width="22" height="20" viewBox="0 0 22 20" className="mt-[7px] ml-[6px] shrink-0">
          <path d="M1 0.5H20L1 20Z" fill="#fff" />
          <path d="M5 20L11.5 13.5L18 20Z" fill="#fff" />
        </svg>
        <span className="ml-[5px] w-[56px] pt-[7px] font-['Open_Sans',sans-serif] text-[14.3px] leading-[24px] font-medium">
          kibana
        </span>
        <span className="flex h-[27px] w-[15px] items-center justify-center bg-[#0b6bb3] pt-[12px]">
          <svg width="6" height="10" viewBox="0 0 6 10" fill="none" stroke="#fff" strokeWidth="1.3">
            <path d="M5 1L1.2 5L5 9" />
          </svg>
        </span>
      </div>
    </div>
  );
}
